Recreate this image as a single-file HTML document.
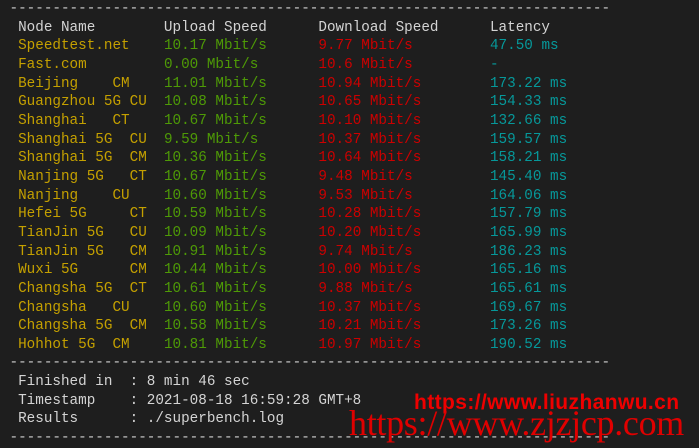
<!DOCTYPE html>
<html><head><meta charset="utf-8"><style>
html,body{margin:0;padding:0;background:#1e1e1e;width:699px;height:441px;overflow:hidden}
pre{position:absolute;left:9.5px;top:0px;margin:0;font-family:"Liberation Mono",monospace;font-size:14.3px;line-height:18.65px;color:#cccccc}
.y{color:#c4a000}.g{color:#4e9a06}.r{color:#cc0000}.c{color:#06989a}.w{color:#d4d4d4}
.wm1{position:absolute;left:414px;top:391px;font-family:"Liberation Sans",sans-serif;font-weight:bold;font-size:21px;color:#ee0000;letter-spacing:0.4px}
.wm2{position:absolute;left:349px;top:402px;font-family:"Liberation Serif",serif;font-size:36px;color:#e00000;letter-spacing:-0.3px}
</style></head><body>
<pre>----------------------------------------------------------------------
<span class="w"> Node Name        Upload Speed      Download Speed      Latency</span>
<span class="y"> Speedtest.net    </span><span class="g">10.17 Mbit/s      </span><span class="r">9.77 Mbit/s         </span><span class="c">47.50 ms</span>
<span class="y"> Fast.com         </span><span class="g">0.00 Mbit/s       </span><span class="r">10.6 Mbit/s         </span><span class="c">-</span>
<span class="y"> Beijing    CM    </span><span class="g">11.01 Mbit/s      </span><span class="r">10.94 Mbit/s        </span><span class="c">173.22 ms</span>
<span class="y"> Guangzhou 5G CU  </span><span class="g">10.08 Mbit/s      </span><span class="r">10.65 Mbit/s        </span><span class="c">154.33 ms</span>
<span class="y"> Shanghai   CT    </span><span class="g">10.67 Mbit/s      </span><span class="r">10.10 Mbit/s        </span><span class="c">132.66 ms</span>
<span class="y"> Shanghai 5G  CU  </span><span class="g">9.59 Mbit/s       </span><span class="r">10.37 Mbit/s        </span><span class="c">159.57 ms</span>
<span class="y"> Shanghai 5G  CM  </span><span class="g">10.36 Mbit/s      </span><span class="r">10.64 Mbit/s        </span><span class="c">158.21 ms</span>
<span class="y"> Nanjing 5G   CT  </span><span class="g">10.67 Mbit/s      </span><span class="r">9.48 Mbit/s         </span><span class="c">145.40 ms</span>
<span class="y"> Nanjing    CU    </span><span class="g">10.60 Mbit/s      </span><span class="r">9.53 Mbit/s         </span><span class="c">164.06 ms</span>
<span class="y"> Hefei 5G     CT  </span><span class="g">10.59 Mbit/s      </span><span class="r">10.28 Mbit/s        </span><span class="c">157.79 ms</span>
<span class="y"> TianJin 5G   CU  </span><span class="g">10.09 Mbit/s      </span><span class="r">10.20 Mbit/s        </span><span class="c">165.99 ms</span>
<span class="y"> TianJin 5G   CM  </span><span class="g">10.91 Mbit/s      </span><span class="r">9.74 Mbit/s         </span><span class="c">186.23 ms</span>
<span class="y"> Wuxi 5G      CM  </span><span class="g">10.44 Mbit/s      </span><span class="r">10.00 Mbit/s        </span><span class="c">165.16 ms</span>
<span class="y"> Changsha 5G  CT  </span><span class="g">10.61 Mbit/s      </span><span class="r">9.88 Mbit/s         </span><span class="c">165.61 ms</span>
<span class="y"> Changsha   CU    </span><span class="g">10.60 Mbit/s      </span><span class="r">10.37 Mbit/s        </span><span class="c">169.67 ms</span>
<span class="y"> Changsha 5G  CM  </span><span class="g">10.58 Mbit/s      </span><span class="r">10.21 Mbit/s        </span><span class="c">173.26 ms</span>
<span class="y"> Hohhot 5G  CM    </span><span class="g">10.81 Mbit/s      </span><span class="r">10.97 Mbit/s        </span><span class="c">190.52 ms</span>
----------------------------------------------------------------------
<span class="w"> Finished in  : 8 min 46 sec
 Timestamp    : 2021-08-18 16:59:28 GMT+8
 Results      : ./superbench.log</span>
----------------------------------------------------------------------</pre>
<div class="wm1">https://www.liuzhanwu.cn</div>
<div class="wm2">https://www.zjzjcp.com</div>
</body></html>
